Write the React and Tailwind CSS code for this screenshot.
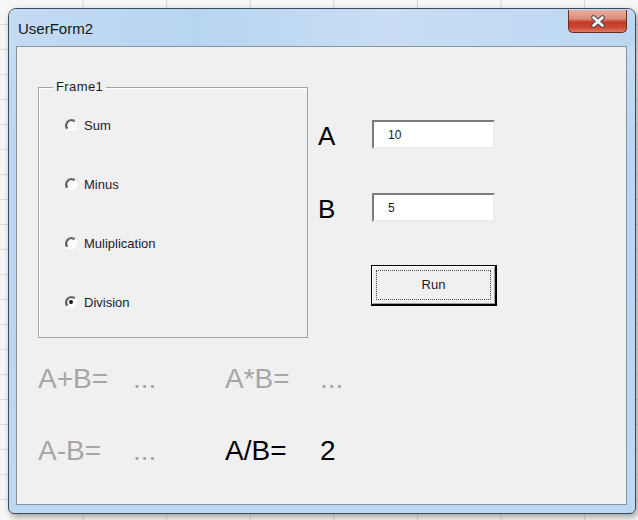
import React from 'react';

const font = { fontFamily: '"Liberation Sans", Arial, sans-serif' };

// classic sunken radio circle
const Radio = ({ checked }) => (
  <svg width="14" height="14" viewBox="0 0 14 14" className="shrink-0">
    <circle cx="7" cy="7" r="6" fill="#fbfbfb" />
    <path d="M2.8 11.2 A6 6 0 0 1 11.2 2.8" stroke="#7a7a7a" strokeWidth="1.4" fill="none" />
    <path d="M3.7 10.3 A4.7 4.7 0 0 1 10.3 3.7" stroke="#3c3c3c" strokeWidth="1.1" fill="none" />
    <path d="M11.2 2.8 A6 6 0 0 1 2.8 11.2" stroke="#ffffff" strokeWidth="1.4" fill="none" />
    {checked && <circle cx="7" cy="7" r="2" fill="#111" />}
  </svg>
);

const RadioRow = ({ label, checked }) => (
  <div className="flex items-center gap-[6px] h-[20px]">
    <Radio checked={checked} />
    <span className="text-[13px] text-[#1a1a2c] leading-none">{label}</span>
  </div>
);

const TextBox = ({ value }) => (
  <div className="w-[123px] h-[29px] bg-white border-2 border-t-[#7a7a7a] border-l-[#7a7a7a] border-r-[#ececec] border-b-[#ececec] flex items-center pl-[14px] text-[12px] text-[#1a1a2c]">
    {value}
  </div>
);

const ResultRow = ({ items }) => (
  <div className="flex h-[28px] leading-none text-[28px]">
    {items.map((it, i) => (
      <div
        key={i}
        className={`${i === 0 ? 'w-[95px]' : i === 1 ? 'w-[92px]' : i === 2 ? 'w-[95px]' : 'w-[60px]'} ${it.on ? 'text-black' : 'text-[#a6a6a6]'}`}
      >
        {it.t}
      </div>
    ))}
  </div>
);

export default function App() {
  return (
    <div
      className="w-[638px] h-[520px] overflow-hidden pt-[8px] pl-[8px] bg-[#f6f6f6] bg-[linear-gradient(to_right,#d6d6d6_1px,transparent_1px),linear-gradient(to_bottom,#dcdcdc_1px,transparent_1px)] bg-[size:83.6px_25px] bg-[position:-1px_-1px]"
      style={font}
    >
      <div className="w-[628px] h-[506px] flex flex-col rounded-t-[8px] rounded-b-[6px] border border-[#3d4a57] bg-[linear-gradient(to_bottom,#c7ddf4,#b9d5f1_30%,#bdd8f3)] shadow-[2px_3px_6px_rgba(0,0,0,0.35)]">
        {/* title bar */}
        <div className="h-[37px] flex justify-between items-start pl-[9px] pr-[8px] rounded-t-[7px] bg-[linear-gradient(to_right,#c3dbf3,#b7d4f1_30%,#c9def4_60%,#bcd7f2)]">
          <div className="pt-[11px] text-[15px] leading-[18px] text-[#151515]">UserForm2</div>
          <div className="mt-[1px] w-[59px] h-[23px] rounded-b-[5px] border border-t-0 border-[#6b2a22] bg-[linear-gradient(to_bottom,#e9b0a2,#dc8c79_40%,#c43a24_55%,#cd4a34_80%,#e07a62)] flex items-center justify-center">
            <svg width="16" height="13" viewBox="0 0 16 13">
              <path d="M3.5 2.5 L12.5 10.5 M12.5 2.5 L3.5 10.5" stroke="#4a4a4a" strokeWidth="4.6" strokeLinecap="round" />
              <path d="M3.5 2.5 L12.5 10.5 M12.5 2.5 L3.5 10.5" stroke="#ffffff" strokeWidth="2.6" strokeLinecap="round" />
            </svg>
          </div>
        </div>

        {/* form body */}
        <div className="flex-1 ml-[7px] mr-[8px] mb-[8px] border border-[#8a949f] bg-[#f0f0f0] pl-[21px] pt-[40px]">
          <div className="flex">
            <div className="relative w-[270px] h-[251px] border border-[#a3a3a3] shadow-[inset_1px_1px_0_#fff] pt-[27px] pl-[25px] flex flex-col gap-[39px]">
              <span className="absolute -top-[9px] left-[14px] px-[3px] bg-[#f0f0f0] text-[13px] leading-[16px] text-[#1a1a2c] tracking-[0.4px]">
                Frame1
              </span>
              <RadioRow label="Sum" />
              <RadioRow label="Minus" />
              <RadioRow label="Muliplication" />
              <RadioRow label="Division" checked />
            </div>

            <div className="ml-[10px] mt-[33px] flex flex-col">
              <div className="flex items-center h-[29px]">
                <div className="w-[54px] text-[26px] leading-none text-black pt-[3px]">A</div>
                <TextBox value="10" />
              </div>
              <div className="flex items-center h-[29px] mt-[44px]">
                <div className="w-[54px] text-[26px] leading-none text-black pt-[3px]">B</div>
                <TextBox value="5" />
              </div>
              <div className="ml-[53px] mt-[43px] w-[126px] h-[41px] flex border-t border-l border-r-2 border-b-2 border-black bg-[#f0f0f0]">
                <div className="flex-1 flex border-t border-l border-white border-r border-b border-r-[#a0a0a0] border-b-[#a0a0a0] p-[3px]">
                  <div className="flex-1 border border-dotted border-[#4a4a4a] flex items-center justify-center text-[13px] text-[#1a1a2c]">
                    Run
                  </div>
                </div>
              </div>
            </div>
          </div>

          <div className="mt-[27px] flex flex-col gap-[44px]">
            <ResultRow items={[{ t: 'A+B=' }, { t: '...' }, { t: 'A*B=' }, { t: '...' }]} />
            <ResultRow items={[{ t: 'A-B=' }, { t: '...' }, { t: 'A/B=', on: true }, { t: '2', on: true }]} />
          </div>
        </div>
      </div>
    </div>
  );
}
